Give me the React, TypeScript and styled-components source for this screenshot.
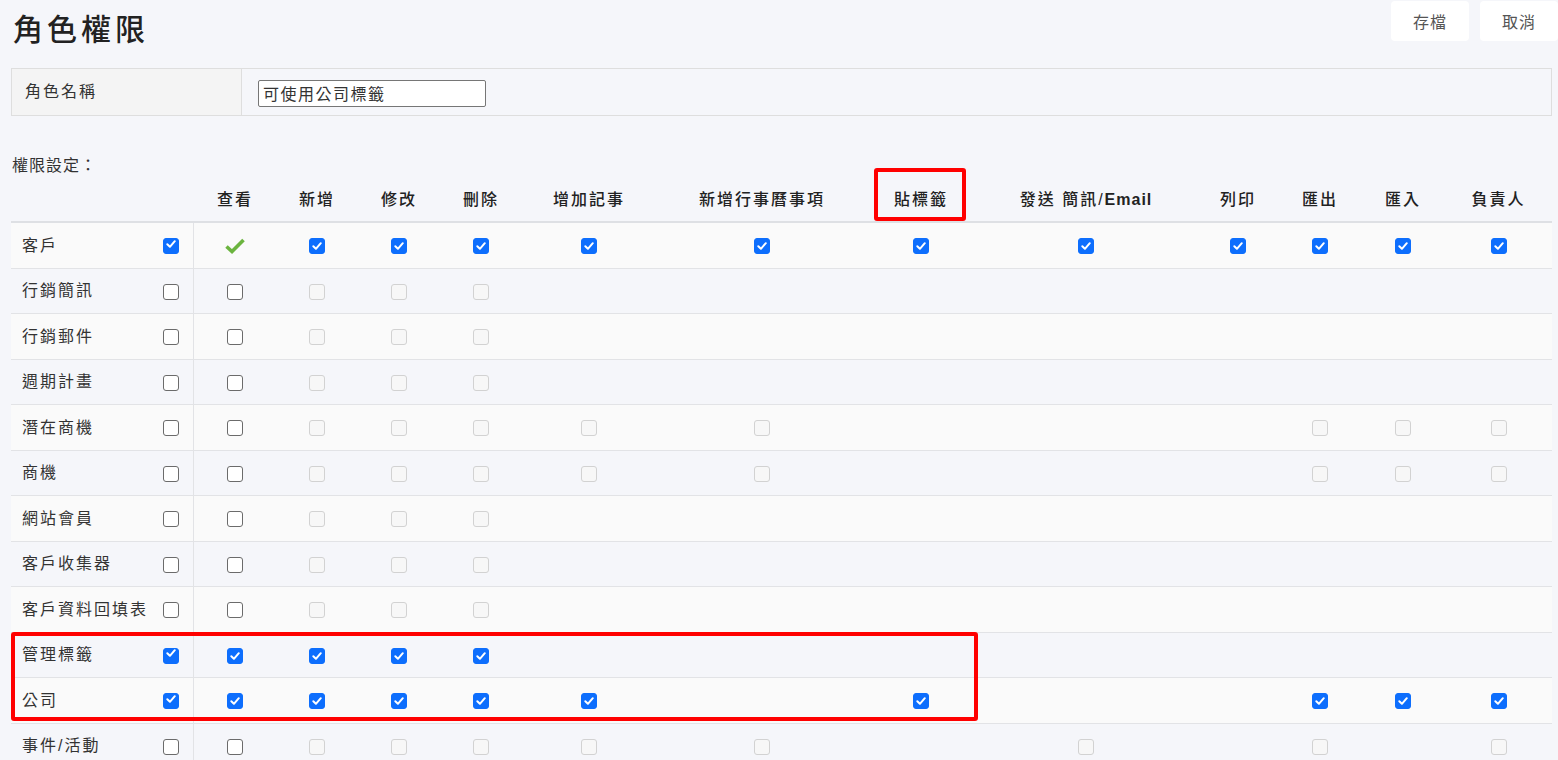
import styled, { createGlobalStyle } from 'styled-components';

type Cell = 'c' | 'u' | 'd' | 'g' | '';

const COLUMNS: { title: string; width: number; bold?: boolean; mark?: boolean }[] = [
	{ title: '查看', width: 84 },
	{ title: '新增', width: 80 },
	{ title: '修改', width: 84 },
	{ title: '刪除', width: 80 },
	{ title: '增加記事', width: 136 },
	{ title: '新增行事曆事項', width: 210 },
	{ title: '貼標籤', width: 108, mark: true },
	{ title: '發送 簡訊/', width: 222, bold: true },
	{ title: '列印', width: 82 },
	{ title: '匯出', width: 82 },
	{ title: '匯入', width: 84 },
	{ title: '負責人', width: 107 },
];

const ROWS: { name: string; all: Cell; cells: Cell[] }[] = [
	{ name: '客戶', all: 'c', cells: ['g', 'c', 'c', 'c', 'c', 'c', 'c', 'c', 'c', 'c', 'c', 'c'] },
	{ name: '行銷簡訊', all: 'u', cells: ['u', 'd', 'd', 'd'] },
	{ name: '行銷郵件', all: 'u', cells: ['u', 'd', 'd', 'd'] },
	{ name: '週期計畫', all: 'u', cells: ['u', 'd', 'd', 'd'] },
	{ name: '潛在商機', all: 'u', cells: ['u', 'd', 'd', 'd', 'd', 'd', '', '', '', 'd', 'd', 'd'] },
	{ name: '商機', all: 'u', cells: ['u', 'd', 'd', 'd', 'd', 'd', '', '', '', 'd', 'd', 'd'] },
	{ name: '網站會員', all: 'u', cells: ['u', 'd', 'd', 'd'] },
	{ name: '客戶收集器', all: 'u', cells: ['u', 'd', 'd', 'd'] },
	{ name: '客戶資料回填表', all: 'u', cells: ['u', 'd', 'd', 'd'] },
	{ name: '管理標籤', all: 'c', cells: ['c', 'c', 'c', 'c'] },
	{ name: '公司', all: 'c', cells: ['c', 'c', 'c', 'c', 'c', '', 'c', '', '', 'c', 'c', 'c'] },
	{ name: '事件/活動', all: 'u', cells: ['u', 'd', 'd', 'd', 'd', 'd', '', 'd', '', 'd', '', 'd'] },
];

const GlobalStyle = createGlobalStyle`
	html, body {
		margin: 0;
		background: #f5f6fa;
		font-family: "Liberation Sans", "Noto Sans CJK TC", sans-serif;
		color: #333;
	}
`;

const Page = styled.div`
	height: 760px;
	overflow: hidden;
	padding: 0 6px 0 11px;
`;

const TopBar = styled.div`
	display: flex;
	justify-content: space-between;
	align-items: flex-start;
	height: 68px;
`;

const Title = styled.h1`
	margin: 12px 0 0 2px;
	font-size: 30px;
	line-height: 35px;
	font-weight: 500;
	letter-spacing: 4px;
	color: #222;
`;

const Actions = styled.div`
	display: flex;
	gap: 11px;
	margin: 1px -6px 0 0;
`;

const ActionButton = styled.button`
	width: 78px;
	height: 40px;
	border: none;
	border-radius: 4px;
	background: #fff;
	color: #555;
	font-family: inherit;
	font-size: 16px;
	letter-spacing: 1px;
`;

const RoleBox = styled.div`
	display: grid;
	grid-template-columns: 230px 1fr;
	height: 48px;
	border: 1px solid #dedede;
	box-sizing: border-box;
`;

const RoleLabel = styled.div`
	display: flex;
	align-items: center;
	padding: 0 0 4px 13px;
	background: #f4f4f4;
	border-right: 1px solid #dedede;
	font-size: 16px;
	letter-spacing: 2px;
`;

const RoleValue = styled.div`
	display: flex;
	align-items: center;
	padding: 2px 0 0 16px;
`;

const NameInput = styled.input`
	width: 228px;
	height: 27px;
	box-sizing: border-box;
	padding: 0 4px;
	border: 1px solid #767676;
	border-radius: 2px;
	background: #fff;
	font-family: inherit;
	font-size: 16px;
	letter-spacing: 1.5px;
	color: #333;
`;

const SectionLabel = styled.div`
	margin-top: 40px;
	height: 20px;
	line-height: 20px;
	font-size: 16px;
	letter-spacing: 1px;
	padding-left: 1px;
`;

const TableWrap = styled.div`
	position: relative;
	width: 1541px;
`;

const Grid = styled.table`
	width: 1541px;
	table-layout: fixed;
	border-collapse: collapse;
`;

const HeadCell = styled.th`
	position: relative;
	height: 43px;
	padding: 0 0 2px;
	border-bottom: 2px solid #dee0e4;
	text-align: center;
	font-size: 16px;
	font-weight: 500;
	letter-spacing: 2px;
	color: #222;
	white-space: nowrap;
	b {
		font-weight: bold;
		letter-spacing: 1px;
	}
`;

const BodyRow = styled.tr<{ $striped: boolean }>`
	background: ${(p) => (p.$striped ? '#fafafa' : 'transparent')};
	border-top: 1px solid #e2e3e6;
`;

const NameCell = styled.td`
	height: 44.5px;
	padding: 0 14px 0 11px;
	border-right: 1px solid #e2e3e6;
`;

const NameInner = styled.div`
	display: flex;
	justify-content: space-between;
	align-items: center;
	padding-top: 2px;
	font-size: 16px;
	letter-spacing: 2px;
	span {
		padding-bottom: 5px;
	}
`;

const DataCell = styled.td`
	height: 44.5px;
	padding: 0;
	text-align: center;
	vertical-align: middle;
`;

const Box = styled.span<{ $state: Cell }>`
	display: inline-flex;
	align-items: center;
	justify-content: center;
	vertical-align: middle;
	width: 16px;
	height: 16px;
	box-sizing: border-box;
	border-radius: 3px;
	border: 1px solid
		${(p) => (p.$state === 'c' ? '#0d6efd' : p.$state === 'u' ? '#6b6b6b' : '#d2d2d2')};
	background: ${(p) => (p.$state === 'c' ? '#0d6efd' : p.$state === 'u' ? '#fff' : '#f7f7f7')};
`;

const Mark = styled.span`
	position: absolute;
	top: -8px;
	bottom: 0;
	left: 7px;
	right: 9px;
	border: 4px solid #f00;
	border-radius: 3px;
	pointer-events: none;
`;

const RowsMark = styled.div`
	position: absolute;
	top: 456px;
	left: 0;
	width: 967px;
	height: 89px;
	box-sizing: border-box;
	border: 4px solid #f00;
	border-radius: 3px;
	pointer-events: none;
`;

const Check = ({ state }: { state: Cell }) => {
	if (!state) return null;
	if (state === 'g') {
		return (
			<svg width="20" height="16" viewBox="0 0 20 16" style={{ verticalAlign: 'middle' }}>
				<path d="M1.5 8.5 L7 13.5 L18.5 2" fill="none" stroke="#6bb43f" strokeWidth="3.6" />
			</svg>
		);
	}
	return (
		<Box $state={state}>
			{state === 'c' && (
				<svg width="12" height="12" viewBox="0 0 12 12">
					<path d="M2.3 6.3 L4.9 8.8 L9.8 3.2" fill="none" stroke="#fff" strokeWidth="2" strokeLinecap="round" strokeLinejoin="round" />
				</svg>
			)}
		</Box>
	);
};

export default function App() {
	return (
		<Page>
			<GlobalStyle />
			<TopBar>
				<Title>角色權限</Title>
				<Actions>
					<ActionButton>存檔</ActionButton>
					<ActionButton>取消</ActionButton>
				</Actions>
			</TopBar>

			<RoleBox>
				<RoleLabel>角色名稱</RoleLabel>
				<RoleValue>
					<NameInput value="可使用公司標籤" readOnly />
				</RoleValue>
			</RoleBox>

			<SectionLabel>權限設定：</SectionLabel>

			<TableWrap>
				<Grid>
					<colgroup>
						<col style={{ width: 182 }} />
						{COLUMNS.map((c) => (
							<col key={c.title} style={{ width: c.width }} />
						))}
					</colgroup>
					<thead>
						<tr>
							<HeadCell />
							{COLUMNS.map((c) => (
								<HeadCell key={c.title}>
									{c.title}
									{c.bold && <b>Email</b>}
									{c.mark && <Mark />}
								</HeadCell>
							))}
						</tr>
					</thead>
					<tbody>
						{ROWS.map((r, i) => (
							<BodyRow key={r.name} $striped={i % 2 === 0}>
								<NameCell>
									<NameInner>
										<span>{r.name}</span>
										<Check state={r.all} />
									</NameInner>
								</NameCell>
								{COLUMNS.map((c, j) => (
									<DataCell key={c.title}>
										<Check state={r.cells[j] ?? ''} />
									</DataCell>
								))}
							</BodyRow>
						))}
					</tbody>
				</Grid>
				<RowsMark />
			</TableWrap>
		</Page>
	);
}
